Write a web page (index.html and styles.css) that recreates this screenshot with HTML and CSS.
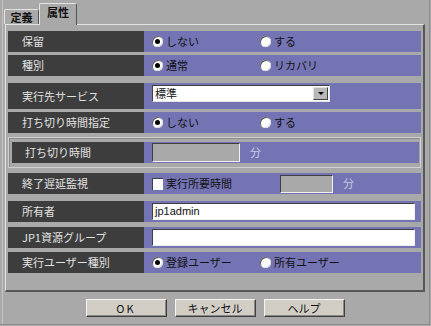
FILE: index.html
```html
<!DOCTYPE html>
<html lang="ja">
<head>
  <meta charset="UTF-8" />
  <title>属性</title>
  <link rel="stylesheet" href="styles.css">
</head>
<body>
  <div class="dialog">
    <div class="tabs">
      <div class="tab">定義</div>
      <div class="tab active">属性</div>
    </div>

    <div class="panel">
      <div class="row r1">
        <div class="label">保留</div>
        <div class="value">
          <span class="opt"><i class="radio on"></i>しない</span>
          <span class="opt"><i class="radio"></i>する</span>
        </div>
      </div>

      <div class="row r2">
        <div class="label">種別</div>
        <div class="value">
          <span class="opt"><i class="radio on"></i>通常</span>
          <span class="opt"><i class="radio"></i>リカバリ</span>
        </div>
      </div>

      <div class="row r3">
        <div class="label">実行先サービス</div>
        <div class="value top">
          <div class="combo">
            <span class="combo-text">標準</span>
            <span class="combo-btn"><i class="arrow"></i></span>
          </div>
        </div>
      </div>

      <div class="row r4">
        <div class="label">打ち切り時間指定</div>
        <div class="value">
          <span class="opt"><i class="radio on"></i>しない</span>
          <span class="opt"><i class="radio"></i>する</span>
        </div>
      </div>

      <div class="group">
        <div class="row">
          <div class="label narrow">打ち切り時間</div>
          <div class="value">
            <span class="field off w88"></span>
            <span class="unit">分</span>
          </div>
        </div>
      </div>

      <div class="row r6">
        <div class="label">終了遅延監視</div>
        <div class="value">
          <span class="check"></span>
          <span class="check-text">実行所要時間</span>
          <span class="field off w53"></span>
          <span class="unit">分</span>
        </div>
      </div>

      <div class="row r7">
        <div class="label">所有者</div>
        <div class="value">
          <span class="field text">jp1admin</span>
        </div>
      </div>

      <div class="row r8">
        <div class="label">JP1資源グループ</div>
        <div class="value">
          <span class="field text"></span>
        </div>
      </div>

      <div class="row r9">
        <div class="label">実行ユーザー種別</div>
        <div class="value">
          <span class="opt"><i class="radio on"></i>登録ユーザー</span>
          <span class="opt"><i class="radio"></i>所有ユーザー</span>
        </div>
      </div>
    </div>

    <div class="buttons">
      <button class="btn ok">OK</button>
      <button class="btn">キャンセル</button>
      <button class="btn">ヘルプ</button>
    </div>
  </div>
</body>
</html>
```

FILE: styles.css
```css
body {
  margin: 0;
  background: #a9a9a9;
  font-family: "Noto Sans CJK JP", "Liberation Sans", sans-serif;
  font-size: 11px;
  line-height: 13px;
  color: #111;
}
.dialog {
  width: 430px;
  height: 325px;
  box-sizing: border-box;
  padding-left: 5px;
  border-right: 1px solid #8c8c8c;
  border-bottom: 1px solid #8c8c8c;
  box-shadow: inset 2px 0 0 #a9a9a9, inset 3px 0 0 #c4c4c4;
}
.tabs {
  display: flex;
  align-items: flex-end;
  height: 24px;
  margin-left: -1px;
}
.tab {
  box-sizing: border-box;
  height: 15px;
  width: 35px;
  background: #a9a9a9;
  border-top: 1px solid #e4e4e4;
  border-left: 1px solid #e4e4e4;
  border-right: 1px solid #555;
  border-radius: 2px 2px 0 0;
  font-weight: bold;
  text-align: center;
  line-height: 14px;
  color: #111;
}
.tab.active {
  height: 22px;
  width: 38px;
  margin-bottom: -1px;
  position: relative;
  z-index: 1;
  line-height: 17px;
}
.panel {
  box-sizing: border-box;
  width: 420px;
  height: 268px;
  padding: 6px 2px 0 2px;
  border-top: 1px solid #e4e4e4;
  border-left: 1px solid #e4e4e4;
  border-right: 2px solid #575757;
  border-bottom: 2px solid #575757;
}
.row {
  display: flex;
  height: 21px;
}
.r2 { margin-top: 3px; }
.r3 { margin-top: 7px; height: 26px; }
.r4 { margin-top: 3px; }
.r6 { margin-top: 5px; }
.r7 { margin-top: 7px; }
.r8 { margin-top: 5px; }
.r9 { margin-top: 4px; }
.label {
  width: 136px;
  flex: none;
  box-sizing: border-box;
  padding-left: 14px;
  background: #3d3d3d;
  color: #e2e2e2;
  display: flex;
  align-items: center;
}
.label.narrow {
  width: 132px;
  padding-left: 13px;
}
.value {
  flex: 1;
  background: #7474b4;
  display: flex;
  align-items: center;
  padding-left: 8px;
}
.value.top { align-items: flex-start; }
.opt {
  display: flex;
  align-items: center;
  width: 108px;
  gap: 3px;
}
.radio {
  width: 11px;
  height: 11px;
  border-radius: 50%;
  background: #fff;
  box-shadow: inset 1px 1px 0 #555, inset -1px -1px 0 #ddd;
  position: relative;
}
.radio.on::after {
  content: "";
  position: absolute;
  left: 3px;
  top: 3px;
  width: 5px;
  height: 5px;
  border-radius: 50%;
  background: #000;
}
.group {
  margin-top: 4px;
  padding: 4px 1px 4px 3px;
  border: 1px solid #d0d0d0;
  box-shadow: inset 1px 1px 0 #8a8a8a;
}
.combo {
  margin-top: 2px;
  width: 178px;
  height: 17px;
  box-sizing: border-box;
  background: #fff;
  border-top: 1px solid #404040;
  border-left: 1px solid #404040;
  border-right: 1px solid #e6e6e6;
  border-bottom: 1px solid #e6e6e6;
  display: flex;
  align-items: center;
  justify-content: space-between;
}
.combo-text { padding-left: 2px; }
.combo-btn {
  width: 15px;
  height: 13px;
  margin-right: 1px;
  box-sizing: border-box;
  background: #b8b8b8;
  border-top: 1px solid #e0e0e0;
  border-left: 1px solid #e0e0e0;
  border-right: 1px solid #404040;
  border-bottom: 1px solid #404040;
  display: flex;
  align-items: center;
  justify-content: center;
}
.arrow {
  width: 0;
  height: 0;
  border-left: 3px solid transparent;
  border-right: 3px solid transparent;
  border-top: 3px solid #000;
}
.field {
  box-sizing: border-box;
  height: 19px;
  border-top: 1px solid #404040;
  border-left: 1px solid #404040;
  border-right: 1px solid #f0f0f0;
  border-bottom: 1px solid #f0f0f0;
}
.field.off { background: #a9a9a9; }
.w88 { width: 88px; }
.w53 { width: 53px; height: 18px; margin-left: 18px; }
.field.text {
  width: 263px;
  height: 17px;
  background: #fff;
  font-family: "Liberation Sans", sans-serif;
  font-size: 11px;
  line-height: 15px;
  padding-left: 2px;
}
.unit {
  margin-left: 10px;
  color: #cacae2;
}
.check {
  width: 11px;
  height: 12px;
  background: #fff;
  box-shadow: inset 1px 1px 0 #404040;
  margin-right: 3px;
}
.check-text { width: 96px; }
.buttons {
  display: flex;
  justify-content: center;
  gap: 8px;
  margin-top: 7px;
  width: 420px;
}
.btn {
  width: 81px;
  height: 18px;
  box-sizing: border-box;
  padding: 0;
  background: #d2cec6;
  border-top: 1px solid #f4f4f4;
  border-left: 1px solid #f4f4f4;
  border-right: 1px solid #404040;
  border-bottom: 1px solid #404040;
  box-shadow: inset -1px -1px 0 #888;
  font-family: "Noto Sans CJK JP", "Liberation Sans", sans-serif;
  font-size: 11px;
  line-height: 14px;
  color: #111;
}
.btn.ok { letter-spacing: 2px; }
```
